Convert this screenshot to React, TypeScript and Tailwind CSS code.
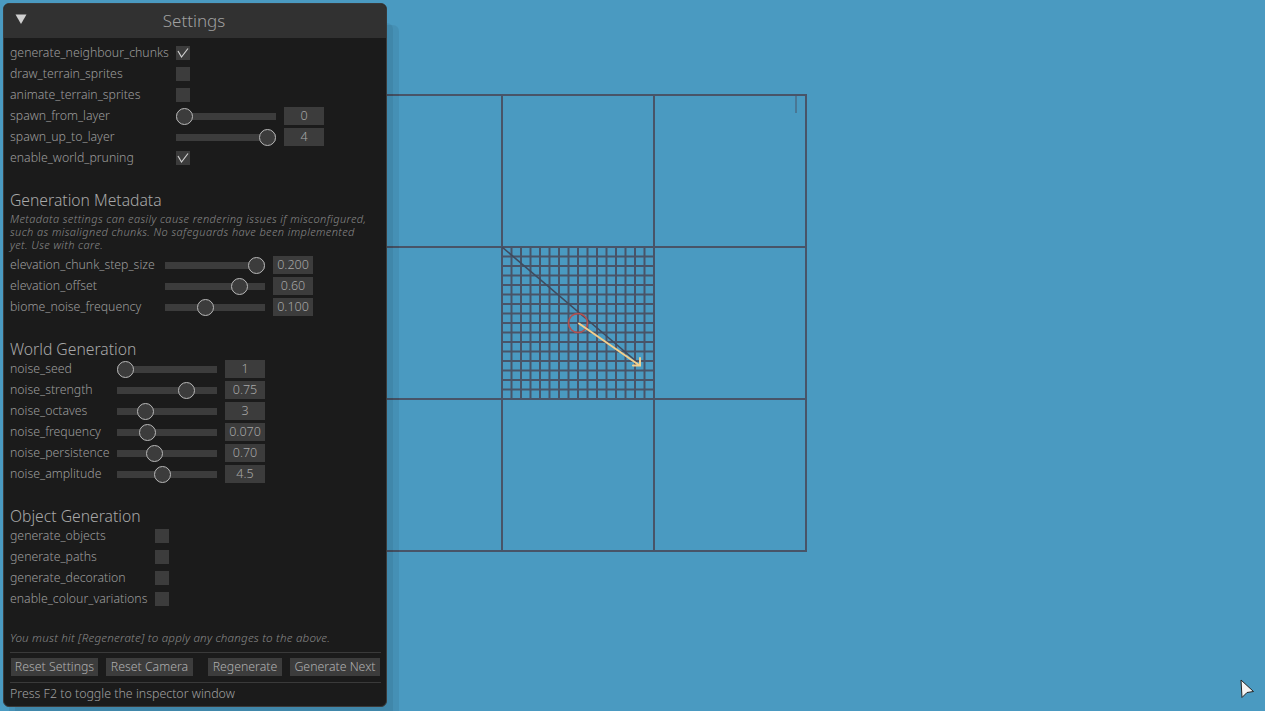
import React from 'react';

const GRID = '#485468';

function Check({ on }: { on?: boolean }) {
  return (
    <div className="w-[14px] h-[14px] bg-[#3c3c3c] shrink-0">
      {on && (
        <svg width="14" height="14" viewBox="0 0 14 14">
          <path d="M2 5 L5.5 11 L12 2.5" fill="none" stroke="#cfcfcf" strokeWidth="1.2" />
        </svg>
      )}
    </div>
  );
}

function Slider({ t, value }: { t: number; value: string }) {
  return (
    <div className="flex items-center">
      <div className="relative w-[100px] h-[17px] flex items-center">
        <div className="w-full h-[7px] bg-[#3c3c3c]" />
        <div
          className="absolute top-0 w-[17px] h-[17px] rounded-full border-[1.5px] border-[#b8b8b8] bg-[#3c3c3c]"
          style={{ left: t * 83 }}
        />
      </div>
      <div className="ml-[8px] w-[40px] h-[18px] bg-[#3c3c3c] flex items-center justify-center text-[12.5px] text-[#a8a8a8]">
        {value}
      </div>
    </div>
  );
}

function Row({ label, w, children }: { label: string; w: string; children: React.ReactNode }) {
  return (
    <div className="flex items-center h-[18px]">
      <div className={`${w} shrink-0 text-[12.3px] text-[#9c9c9c] whitespace-nowrap leading-none`}>{label}</div>
      {children}
    </div>
  );
}

function Heading({ children }: { children: React.ReactNode }) {
  return <div className="text-[15.7px] leading-[20px] text-[#a8a8a8] whitespace-nowrap">{children}</div>;
}

function Button({ children, w }: { children: React.ReactNode; w: string }) {
  return (
    <div className={`${w} h-[18px] bg-[#3c3c3c] flex items-center justify-center text-[12.3px] text-[#b0b0b0] whitespace-nowrap`}>
      {children}
    </div>
  );
}

function Canvas() {
  const sub = Array.from({ length: 15 }, (_, i) => 502 + (i + 1) * 9.5);
  return (
    <svg className="absolute inset-0" width="1265" height="711" viewBox="0 0 1265 711">
      {[95, 247, 399, 551].map((y) => (
        <line key={'h' + y} x1="350" y1={y} x2="807" y2={y} stroke={GRID} strokeWidth="2" />
      ))}
      {[502, 654, 806].map((x) => (
        <line key={'v' + x} x1={x} y1="94" x2={x} y2="552" stroke={GRID} strokeWidth="2" />
      ))}
      {sub.map((p) => (
        <g key={p}>
          <line x1={p} y1="247" x2={p} y2="399" stroke={GRID} strokeWidth="2" />
          <line x1="502" y1={p - 255} x2="654" y2={p - 255} stroke={GRID} strokeWidth="2" />
        </g>
      ))}
      <line x1="796" y1="96" x2="796" y2="113" stroke={GRID} strokeWidth="1" />
      <line x1="502" y1="247" x2="637" y2="362" stroke="#3f4a5e" strokeWidth="1.6" />
      <circle cx="578" cy="323" r="9.5" fill="none" stroke="#b5514f" strokeWidth="1.6" />
      <g stroke="#f3cf8c" strokeWidth="2" fill="none" strokeLinecap="round">
        <line x1="579" y1="323.5" x2="639" y2="365" />
        <path d="M640 358 L640 365.5 L633 365.5" />
      </g>
      <path
        d="M1241 680 L1253.5 691.5 L1247 692.5 L1242 697.5 Z"
        fill="#f4f4f4"
        stroke="#222"
        strokeWidth="1"
        strokeLinejoin="round"
      />
    </svg>
  );
}

export default function App() {
  return (
    <div className="relative w-[1265px] h-[711px] overflow-hidden bg-[#4a9ac1] font-['Noto_Sans',sans-serif] font-light">
      <Canvas />
      <div className="absolute left-[3px] top-[3px] w-[384px] h-[704px] rounded-[6px] border border-[#3a3a3a] bg-[#1b1b1b] shadow-[6px_20px_0_rgba(0,0,0,0.06),12px_22px_0_rgba(0,0,0,0.06)] flex flex-col overflow-hidden">
        <div className="relative h-[34px] shrink-0 bg-[#313131] flex items-center justify-center">
          <svg className="absolute left-[11px] top-[10px]" width="12" height="11" viewBox="0 0 12 11">
            <path d="M0.5 0.5 L11.5 0.5 L6 10 Z" fill="#cfcfcf" />
          </svg>
          <span className="text-[17px] text-[#a0a0a0] -ml-[2px]">Settings</span>
        </div>

        <div className="flex flex-col pl-[6px] pr-[5px] pt-[6px]">
          <div className="flex flex-col gap-[3px]">
            <Row label="generate_neighbour_chunks" w="w-[166px]"><Check on /></Row>
            <Row label="draw_terrain_sprites" w="w-[166px]"><Check /></Row>
            <Row label="animate_terrain_sprites" w="w-[166px]"><Check /></Row>
            <Row label="spawn_from_layer" w="w-[166px]"><Slider t={0} value="0" /></Row>
            <Row label="spawn_up_to_layer" w="w-[166px]"><Slider t={1} value="4" /></Row>
            <Row label="enable_world_pruning" w="w-[166px]"><Check on /></Row>
          </div>

          <div className="mt-[23px]">
            <Heading>Generation Metadata</Heading>
          </div>
          <div className="mt-[2px] text-[11px] leading-[13px] tracking-[0.4px] italic text-[#8a8a8a] whitespace-nowrap">
            <div>Metadata settings can easily cause rendering issues if misconfigured,</div>
            <div>such as misaligned chunks. No safeguards have been implemented</div>
            <div>yet. Use with care.</div>
          </div>
          <div className="mt-[5px] flex flex-col gap-[3px]">
            <Row label="elevation_chunk_step_size" w="w-[155px]"><Slider t={1} value="0.200" /></Row>
            <Row label="elevation_offset" w="w-[155px]"><Slider t={0.8} value="0.60" /></Row>
            <Row label="biome_noise_frequency" w="w-[155px]"><Slider t={0.39} value="0.100" /></Row>
          </div>

          <div className="mt-[23px]">
            <Heading>World Generation</Heading>
          </div>
          <div className="mt-[1px] flex flex-col gap-[3px]">
            <Row label="noise_seed" w="w-[107px]"><Slider t={0} value="1" /></Row>
            <Row label="noise_strength" w="w-[107px]"><Slider t={0.74} value="0.75" /></Row>
            <Row label="noise_octaves" w="w-[107px]"><Slider t={0.24} value="3" /></Row>
            <Row label="noise_frequency" w="w-[107px]"><Slider t={0.27} value="0.070" /></Row>
            <Row label="noise_persistence" w="w-[107px]"><Slider t={0.35} value="0.70" /></Row>
            <Row label="noise_amplitude" w="w-[107px]"><Slider t={0.44} value="4.5" /></Row>
          </div>

          <div className="mt-[23px]">
            <Heading>Object Generation</Heading>
          </div>
          <div className="mt-[1px] flex flex-col gap-[3px]">
            <Row label="generate_objects" w="w-[145px]"><Check /></Row>
            <Row label="generate_paths" w="w-[145px]"><Check /></Row>
            <Row label="generate_decoration" w="w-[145px]"><Check /></Row>
            <Row label="enable_colour_variations" w="w-[145px]"><Check /></Row>
          </div>

          <div className="mt-[23px] text-[11.6px] leading-[14px] italic text-[#8a8a8a] whitespace-nowrap tracking-[0.2px]">
            You must hit [Regenerate] to apply any changes to the above.
          </div>
          <div className="mt-[7px] h-px bg-[#3a3a3a]" />
          <div className="mt-[5px] flex pl-[1px]">
            <Button w="w-[87px]">Reset Settings</Button>
            <div className="ml-[8px]"><Button w="w-[87px]">Reset Camera</Button></div>
            <div className="ml-[15px]"><Button w="w-[74px]">Regenerate</Button></div>
            <div className="ml-[8px]"><Button w="w-[90px]">Generate Next</Button></div>
          </div>
          <div className="mt-[6px] h-px bg-[#3a3a3a]" />
          <div className="mt-[3px] text-[12.4px] leading-[16px] text-[#a0a0a0] whitespace-nowrap">
            Press F2 to toggle the inspector window
          </div>
        </div>
      </div>
    </div>
  );
}
